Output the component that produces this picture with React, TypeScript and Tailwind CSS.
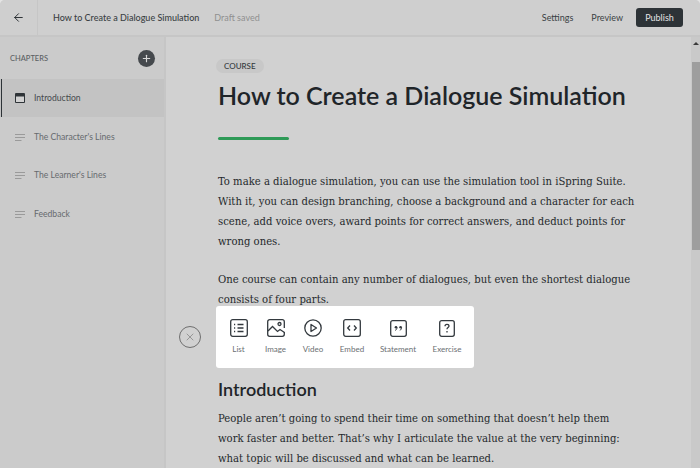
import { ArrowLeft, Plus, X } from "lucide-react";
import type { ReactNode } from "react";

const serif = { fontFamily: '"DejaVu Serif Condensed", "DejaVu Serif", serif' };

const ListIcon = () => (
  <svg width="18" height="18" viewBox="0 0 18 18" fill="none" stroke="#33393e" strokeWidth="1.3">
    <rect x="0.7" y="0.7" width="16.6" height="16.6" rx="2" />
    <path d="M7.5 5.5h6M7.5 9h6M7.5 12.5h6M4 5.5h1.2M4 9h1.2M4 12.5h1.2" />
  </svg>
);

const ImageIcon = () => (
  <svg width="18" height="18" viewBox="0 0 18 18" fill="none" stroke="#33393e" strokeWidth="1.3">
    <path d="M17.3 9V2.700a2 2 0 0 0-2-2H2.700a2 2 0 0 0-2 2v12.600a2 2 0 0 0 2 2h12.600a2 2 0 0 0 2-2V13" />
    <circle cx="12.5" cy="5" r="1.5" />
    <path d="M1 12l4.500-4.500 5 5 2.500-2 4.500 3" />
  </svg>
);

const VideoIcon = () => (
  <svg width="18" height="18" viewBox="0 0 18 18" fill="none" stroke="#33393e" strokeWidth="1.3">
    <circle cx="9" cy="9" r="8.2" />
    <path d="M7 5.500l5.500 3.500L7 12.500z" strokeLinejoin="round" />
  </svg>
);

const EmbedIcon = () => (
  <svg width="18" height="18" viewBox="0 0 18 18" fill="none" stroke="#33393e" strokeWidth="1.3">
    <rect x="0.7" y="0.7" width="16.6" height="16.6" rx="2" />
    <path d="M7 6.500L4.700 9 7 11.500M11 6.500L13.300 9 11 11.500" />
  </svg>
);

const QuoteIcon = () => (
  <svg width="17" height="17" viewBox="0 0 17 17" fill="none" stroke="#33393e" strokeWidth="1.3">
    <rect x="0.7" y="0.7" width="15.6" height="15.6" rx="2" />
    <circle cx="6" cy="7.200" r="1.300" fill="#33393e" stroke="none" />
    <circle cx="10.600" cy="7.200" r="1.300" fill="#33393e" stroke="none" />
    <path d="M7 7.500c0 1.400-.6 2.300-1.800 2.900M11.600 7.500c0 1.400-.6 2.300-1.800 2.900" strokeWidth="1" />
  </svg>
);

const ExerciseIcon = () => (
  <svg width="16" height="17" viewBox="0 0 16 17" fill="none" stroke="#33393e" strokeWidth="1.3">
    <rect x="0.7" y="0.7" width="14.6" height="15.6" rx="2" />
    <path d="M6 6.200c0-1.200.9-1.900 2-1.900s2 .7 2 1.800c0 1.500-2 1.500-2 3.100M8 11v1.400" />
  </svg>
);

const LinesIcon = () => (
  <svg width="10" height="7" viewBox="0 0 10 7" stroke="#9a9a9a" strokeWidth="1">
    <path d="M0 .5h10M0 3.500h10M0 6.500h6.500" />
  </svg>
);

const PageIcon = () => (
  <svg width="10" height="10" viewBox="0 0 10 10">
    <rect width="10" height="10" rx="1" fill="#2f3438" />
    <rect x="1" y="3.500" width="8" height="5.500" fill="#d2d2d2" />
  </svg>
);

const chapters = ["The Character's Lines", "The Learner's Lines", "Feedback"];

const tools: { label: string; icon: ReactNode; width: string }[] = [
  { label: "List", icon: <ListIcon />, width: "w-[37px]" },
  { label: "Image", icon: <ImageIcon />, width: "w-[37px]" },
  { label: "Video", icon: <VideoIcon />, width: "w-[38px]" },
  { label: "Embed", icon: <EmbedIcon />, width: "w-[40px]" },
  { label: "Statement", icon: <QuoteIcon />, width: "w-[52px]" },
  { label: "Exercise", icon: <ExerciseIcon />, width: "w-[46px]" },
];

export default function App() {
  return (
    <div className="w-[700px] h-[468px] bg-[#e4e4e4]">
      <div className="w-full h-full rounded-t-[5px] overflow-hidden flex flex-col bg-[#d1d1d1] text-[#2a2f33]" style={{ fontFamily: "Lato, sans-serif" }}>
        <header className="h-[37px] shrink-0 flex items-center bg-[#cfcfcf] border-b-2 border-[#c6c6c6]">
          <div className="w-[38px] h-full flex items-center justify-center border-r border-[#c6c6c6]">
            <ArrowLeft size={13} strokeWidth={1.8} className="text-[#2a2f33]" />
          </div>
          <span className="ml-[15px] text-[9px] font-medium text-[#3a3f44]">How to Create a Dialogue Simulation</span>
          <span className="ml-[15px] text-[9px] text-[#8f8f8f]">Draft saved</span>
          <div className="ml-auto flex items-center text-[9px] text-[#3a3f44]">
            <span>Settings</span>
            <span className="ml-[18px]">Preview</span>
            <span className="ml-[13px] mr-[17px] w-[47px] h-[19px] rounded-[3px] bg-[#2d3337] text-[#e4e4e4] flex items-center justify-center">Publish</span>
          </div>
        </header>

        <div className="flex-1 min-h-0 flex">
          <aside className="w-[166px] shrink-0 bg-[#cbcbcb] border-r-2 border-[#c6c6c6]">
            <div className="h-[42px] flex items-center justify-between pl-[10px] pr-[9px]">
              <span className="mt-[2px] text-[7.500px] font-medium text-[#5b5f63]">CHAPTERS</span>
              <span className="w-[17px] h-[17px] rounded-full bg-[#45494d] flex items-center justify-center">
                <Plus size={11} strokeWidth={2.5} className="text-[#d8d8d8]" />
              </span>
            </div>
            <div className="h-[38px] flex items-center bg-[#c3c3c3]">
              <div className="ml-px w-px h-full bg-[#2d3337]" />
              <div className="ml-[13px]">
                <PageIcon />
              </div>
              <span className="ml-[9px] text-[8.600px] text-[#45494d]">Introduction</span>
            </div>
            {chapters.map((title) => (
              <div key={title} className="h-[38.500px] flex items-center pl-[15px] pt-[2px]">
                <LinesIcon />
                <span className="ml-[9px] text-[8.600px] text-[#666a6e]">{title}</span>
              </div>
            ))}
          </aside>

          <main className="relative flex-1 min-w-0 flex">
            <div className="flex-1 min-w-0 pl-[52px] pt-[22px]">
              <span className="block w-fit -ml-[2px] h-[14px] leading-[14px] px-[8px] rounded-full bg-[#c8c8c8] text-[8px] font-medium text-[#33383c]">COURSE</span>
              <h1 className="mt-[5px] text-[25px] leading-[34px] font-semibold text-[#1f2529] whitespace-nowrap">How to Create a Dialogue Simulation</h1>
              <div className="mt-[25px] w-[71px] h-[3px] rounded-full bg-[#2e9a57]" />
              <div className="mt-[32px] text-[11.200px] leading-[20px] text-[#25292c] font-stretch-condensed whitespace-nowrap" style={serif}>
                <p>
                  To make a dialogue simulation, you can use the simulation tool in iSpring Suite.<br />
                  With it, you can design branching, choose a background and a character for each<br />
                  scene, add voice overs, award points for correct answers, and deduct points for<br />
                  wrong ones.
                </p>
                <p className="mt-[18px]">
                  One course can contain any number of dialogues, but even the shortest dialogue<br />
                  consists of four parts.
                </p>
              </div>
              <h2 className="mt-[67px] text-[18px] leading-[24px] font-semibold text-[#1f2529]">Introduction</h2>
              <p className="mt-[8px] text-[11.200px] leading-[20px] text-[#25292c] font-stretch-condensed whitespace-nowrap" style={serif}>
                People aren’t going to spend their time on something that doesn’t help them<br />
                work faster and better. That’s why I articulate the value at the very beginning:<br />
                what topic will be discussed and what can be learned.
              </p>
            </div>

            <div className="w-[9px] shrink-0 bg-[#c9c9c9] flex flex-col items-center">
              <div className="mt-[5px] w-0 h-0 border-x-[3px] border-x-transparent border-b-[3px] border-b-[#3a3a3a]" />
              <div className="mt-[17px] w-[8px] h-[188px] ml-px bg-[#9e9e9e]" />
            </div>

            <span className="absolute left-[13px] top-[289px] w-[22px] h-[22px] rounded-full border border-[#6f6f6f] flex items-center justify-center">
              <X size={12} strokeWidth={1.2} className="text-[#6f6f6f]" />
            </span>
            <div className="absolute left-[50px] top-[269px] w-[258px] h-[62px] bg-white rounded-[3px] flex pl-[4px] pt-[13px]">
              {tools.map((tool) => (
                <div key={tool.label} className={`${tool.width} flex flex-col items-center`}>
                  <div className="h-[18px] flex items-center">{tool.icon}</div>
                  <span className="mt-[6px] text-[8px] leading-[12px] text-[#6b6f73] whitespace-nowrap">{tool.label}</span>
                </div>
              ))}
            </div>
          </main>
        </div>
      </div>
    </div>
  );
}
